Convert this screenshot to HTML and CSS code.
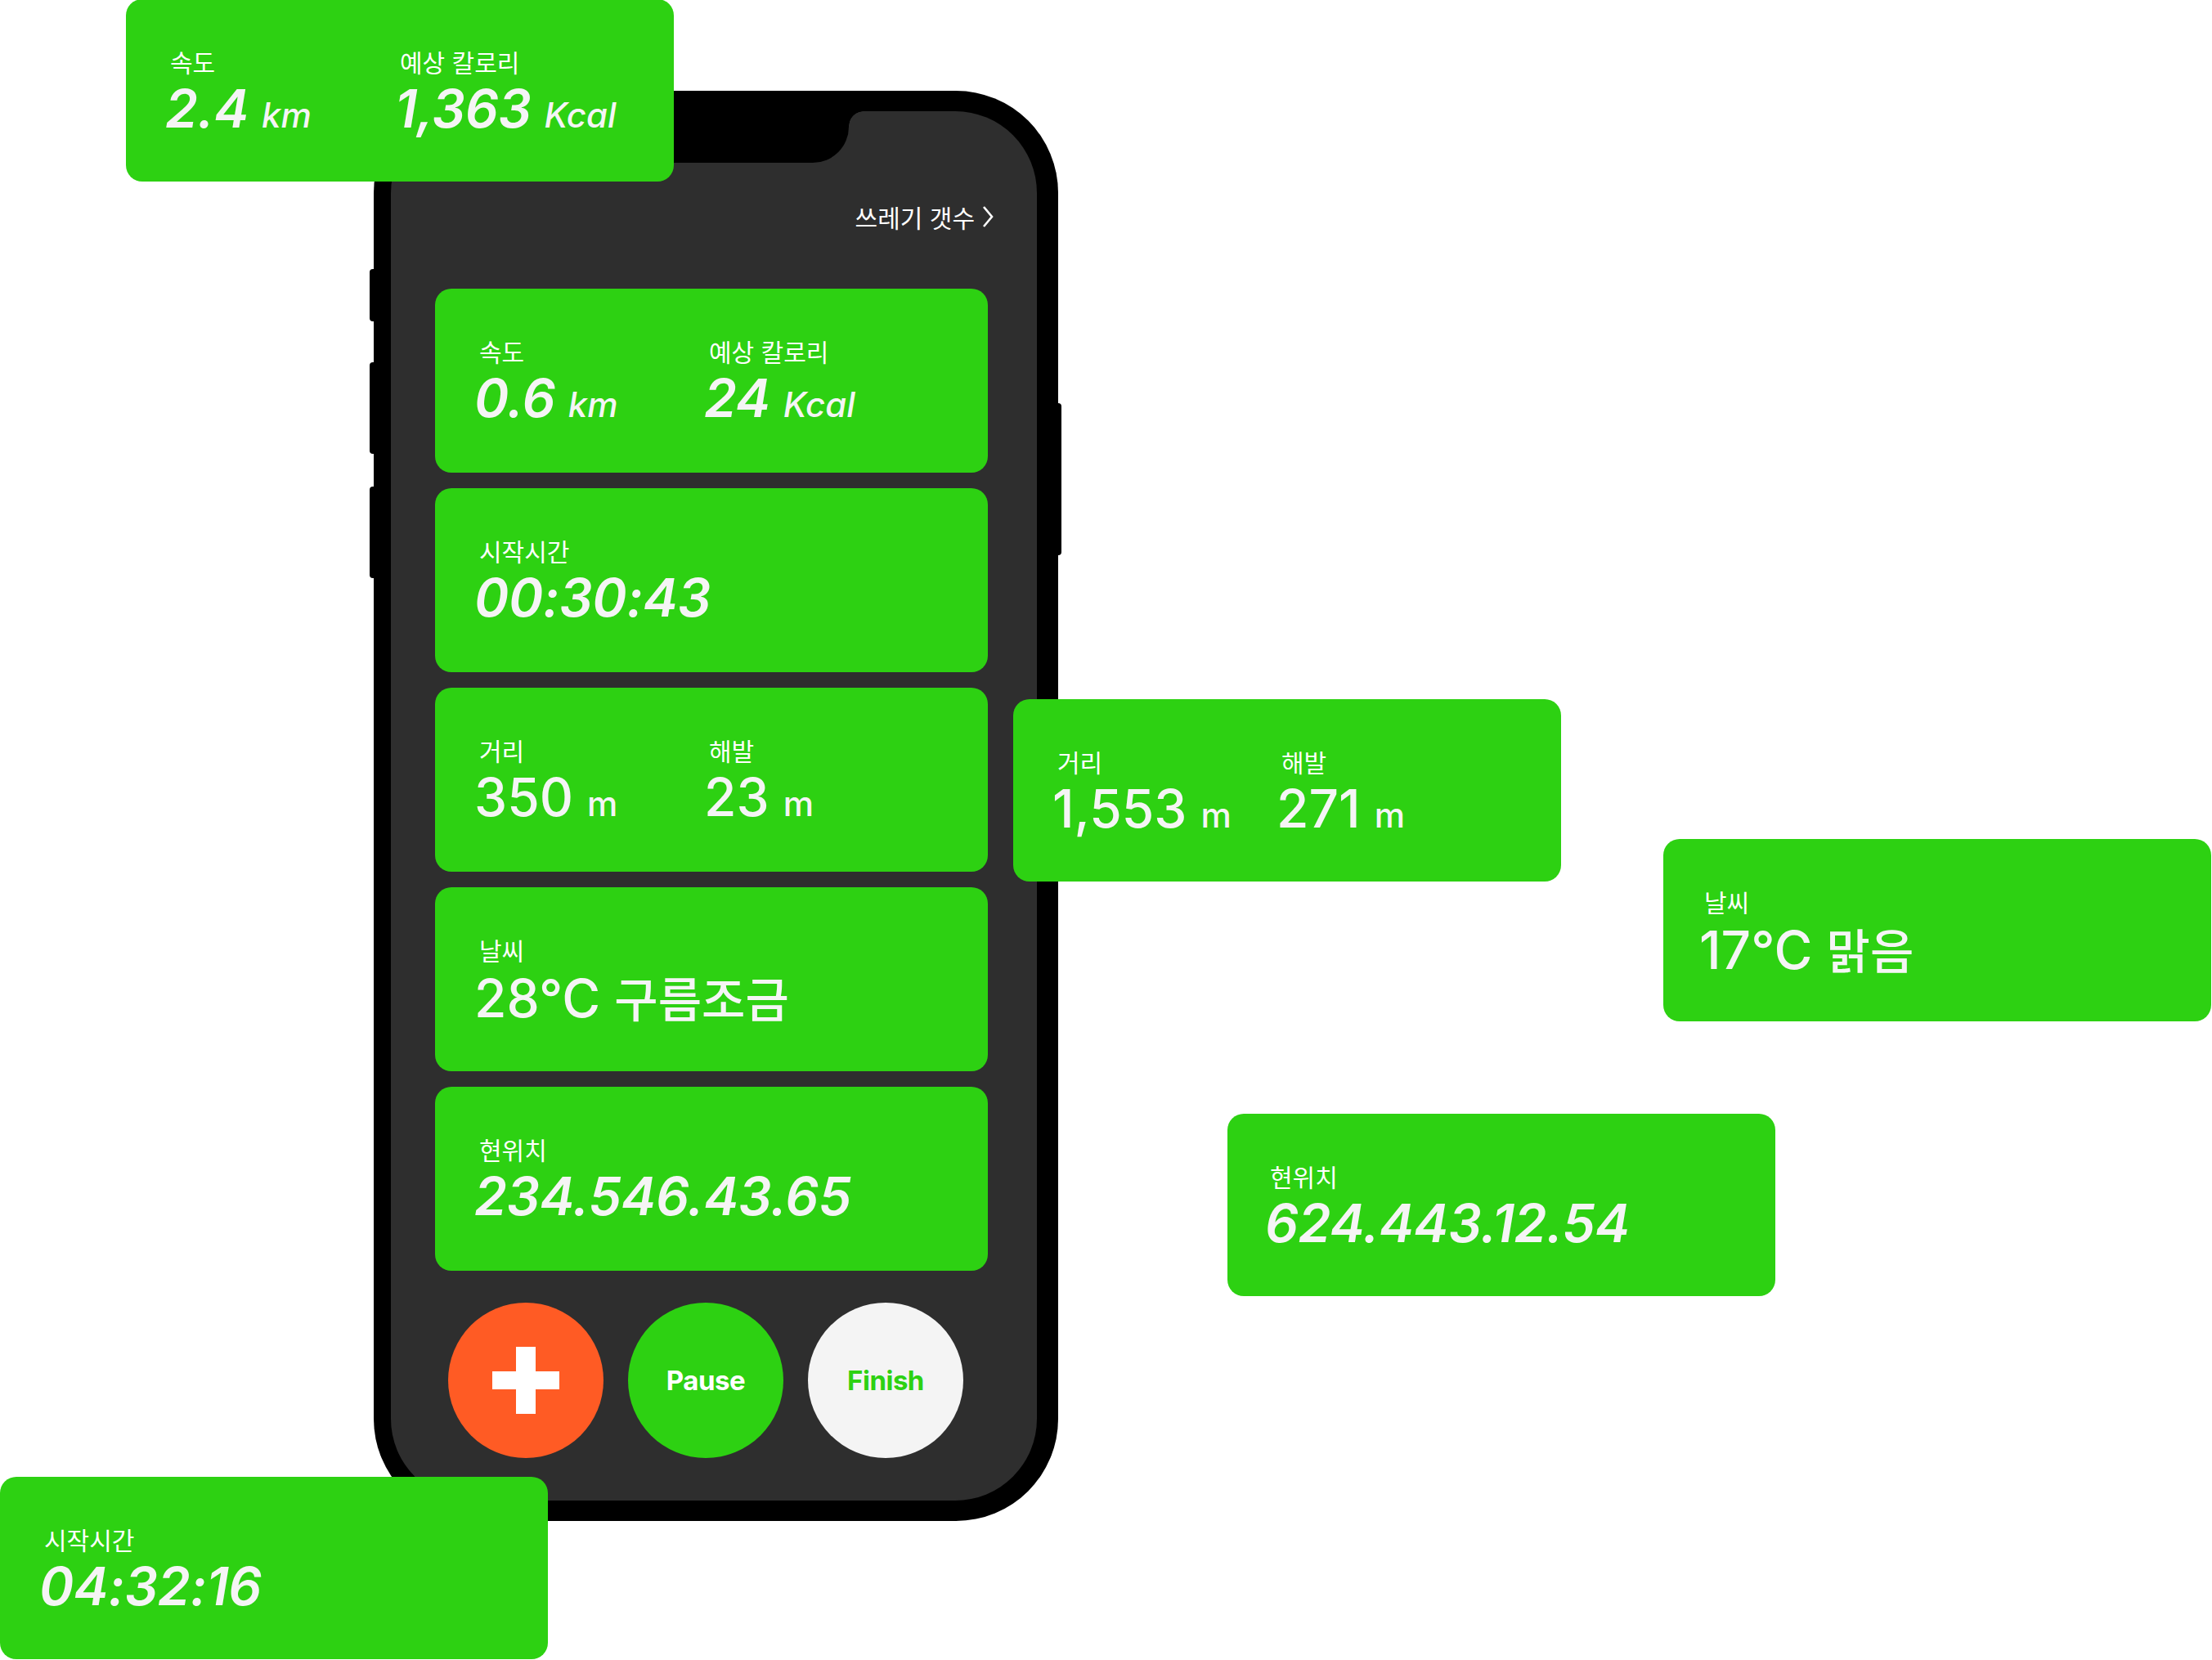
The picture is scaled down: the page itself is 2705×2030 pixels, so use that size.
FILE: index.html
```html
<!DOCTYPE html>
<html lang="ko">
<head>
    <meta charset="UTF-8">
    <meta name="viewport" content="width=device-width, initial-scale=1.0">
    <title>플로깅 | 기록</title>
    <link rel="stylesheet" href="styles.css">
</head>
<body>
    <div class="stage">
        <div class="phone">
            <span class="side-btn side-btn--mute"></span>
            <span class="side-btn side-btn--vol-up"></span>
            <span class="side-btn side-btn--vol-down"></span>
            <span class="side-btn side-btn--power"></span>

            <div class="screen">
                <div class="notch"></div>

                <div class="screen-top">
                    <a class="trash-link" href="#">쓰레기 갯수
                        <svg width="16" height="28" viewBox="0 0 16 28"><polyline points="3,2 13,14 3,26" fill="none" stroke="#fff" stroke-width="2.6"/></svg>
                    </a>
                </div>

                <div class="cards">
                    <div class="card card--split">
                        <div class="stat">
                            <p class="label">속도</p>
                            <p class="value value--italic">0.6 <span class="unit">km</span></p>
                        </div>
                        <div class="stat">
                            <p class="label">예상 칼로리</p>
                            <p class="value value--italic">24 <span class="unit">Kcal</span></p>
                        </div>
                    </div>

                    <div class="card">
                        <p class="label">시작시간</p>
                        <p class="value value--italic">00:30:43</p>
                    </div>

                    <div class="card card--split">
                        <div class="stat">
                            <p class="label">거리</p>
                            <p class="value">350 <span class="unit">m</span></p>
                        </div>
                        <div class="stat">
                            <p class="label">해발</p>
                            <p class="value">23 <span class="unit">m</span></p>
                        </div>
                    </div>

                    <div class="card">
                        <p class="label">날씨</p>
                        <p class="value">28°C <span class="ko">구름조금</span></p>
                    </div>

                    <div class="card">
                        <p class="label">현위치</p>
                        <p class="value value--italic">234.546.43.65</p>
                    </div>
                </div>

                <div class="actions">
                    <button class="round round--add" aria-label="추가">
                        <svg width="82" height="82" viewBox="0 0 82 82"><rect x="29" y="0" width="24" height="82" fill="#fff"/><rect x="0" y="30" width="82" height="22" fill="#fff"/></svg>
                    </button>
                    <button class="round round--pause">Pause</button>
                    <button class="round round--finish">Finish</button>
                </div>
            </div>
        </div>

        <!-- floating stat cards around the phone -->
        <div class="card card--split float float--speed">
            <div class="stat">
                <p class="label">속도</p>
                <p class="value value--italic">2.4 <span class="unit">km</span></p>
            </div>
            <div class="stat">
                <p class="label">예상 칼로리</p>
                <p class="value value--italic">1,363 <span class="unit">Kcal</span></p>
            </div>
        </div>

        <div class="card card--split float float--distance">
            <div class="stat">
                <p class="label">거리</p>
                <p class="value">1,553 <span class="unit">m</span></p>
            </div>
            <div class="stat">
                <p class="label">해발</p>
                <p class="value">271 <span class="unit">m</span></p>
            </div>
        </div>

        <div class="card float float--weather">
            <p class="label">날씨</p>
            <p class="value">17°C <span class="ko">맑음</span></p>
        </div>

        <div class="card float float--location">
            <p class="label">현위치</p>
            <p class="value value--italic">624.443.12.54</p>
        </div>

        <div class="card float float--time">
            <p class="label">시작시간</p>
            <p class="value value--italic">04:32:16</p>
        </div>
    </div>
</body>
</html>
```

FILE: styles.css
```css
* {
    box-sizing: border-box;
}
body {
    margin: 0;
    background: #fff;
    font-family: "Noto Sans CJK KR", "Noto Sans", sans-serif;
    color: #fff;
}
p {
    margin: 0;
}
.stage {
    position: relative;
    width: 2705px;
    height: 2030px;
    overflow: hidden;
}

/* phone mockup */
.phone {
    position: absolute;
    left: 457px;
    top: 111px;
    width: 837px;
    height: 1749px;
    padding: 25px 26px 25px 21px;
    background: #000;
    border-radius: 125px;
}
.side-btn {
    position: absolute;
    width: 10px;
    background: #000;
    border-radius: 4px;
}
.side-btn--mute {
    left: -5px;
    top: 218px;
    height: 64px;
}
.side-btn--vol-up {
    left: -5px;
    top: 332px;
    height: 112px;
}
.side-btn--vol-down {
    left: -5px;
    top: 484px;
    height: 112px;
}
.side-btn--power {
    right: -4px;
    top: 382px;
    height: 186px;
}
.screen {
    position: relative;
    height: 100%;
    padding: 109px 60px 0 54px;
    background: #2e2e2e;
    border-radius: 100px;
    overflow: hidden;
}
.notch {
    position: absolute;
    top: 0;
    left: 50%;
    width: 330px;
    height: 63px;
    margin-left: -165px;
    background: #000;
    border-radius: 0 0 44px 44px;
}
.notch::before,
.notch::after {
    content: "";
    position: absolute;
    top: 0;
    width: 18px;
    height: 18px;
}
.notch::before {
    right: 100%;
    background: radial-gradient(circle at 0 100%, transparent 17.5px, #000 18px);
}
.notch::after {
    left: 100%;
    background: radial-gradient(circle at 100% 100%, transparent 17.5px, #000 18px);
}

.screen-top {
    display: flex;
    justify-content: flex-end;
    margin-right: -8px;
}
.trash-link {
    display: flex;
    align-items: center;
    gap: 8px;
    color: #fff;
    text-decoration: none;
    font-size: 30px;
    line-height: 40px;
}

/* stat cards */
.cards {
    display: flex;
    flex-direction: column;
    gap: 19px;
    margin-top: 68px;
}
.card {
    width: 676px;
    height: 225px;
    padding: 58px 0 0 54px;
    background: #2dd112;
    border-radius: 20px;
}
.card--split {
    display: grid;
    grid-template-columns: 281px 1fr;
}
.label {
    font-size: 30px;
    line-height: 36px;
    font-weight: 400;
}
.value {
    margin: 8px 0 0 -6px;
    font-family: Inter, "Noto Sans CJK KR", sans-serif;
    font-size: 64px;
    line-height: 64px;
    font-weight: 500;
    color: #f5f5f5;
    white-space: nowrap;
}
.value--italic {
    font-style: italic;
    font-weight: 600;
    letter-spacing: -0.3px;
}
.unit {
    font-size: 42px;
    font-weight: 500;
    letter-spacing: 0;
}
.ko {
    font-family: "Noto Sans CJK KR", sans-serif;
    font-size: 58px;
    font-weight: 500;
}

/* bottom buttons */
.actions {
    display: flex;
    gap: 30px;
    margin-top: 39px;
    padding-left: 16px;
}
.round {
    display: flex;
    align-items: center;
    justify-content: center;
    width: 190px;
    height: 190px;
    padding: 0;
    border: none;
    border-radius: 50%;
    font-family: Inter, sans-serif;
    font-size: 33px;
    font-weight: 700;
    letter-spacing: -0.5px;
}
.round--add {
    background: #ff5b24;
}
.round--pause {
    background: #2dd112;
    color: #fff;
}
.round--finish {
    background: #f4f4f4;
    color: #2dd112;
}

/* floating cards */
.float {
    position: absolute;
    width: 670px;
    height: 223px;
}
.float--speed {
    left: 154px;
    top: -1px;
}
.float--distance {
    left: 1239px;
    top: 855px;
    grid-template-columns: 274px 1fr;
}
.float--weather {
    left: 2034px;
    top: 1026px;
    padding-left: 50px;
}
.float--location {
    left: 1501px;
    top: 1362px;
    padding-left: 52px;
}
.float--time {
    left: 0;
    top: 1806px;
}
```
